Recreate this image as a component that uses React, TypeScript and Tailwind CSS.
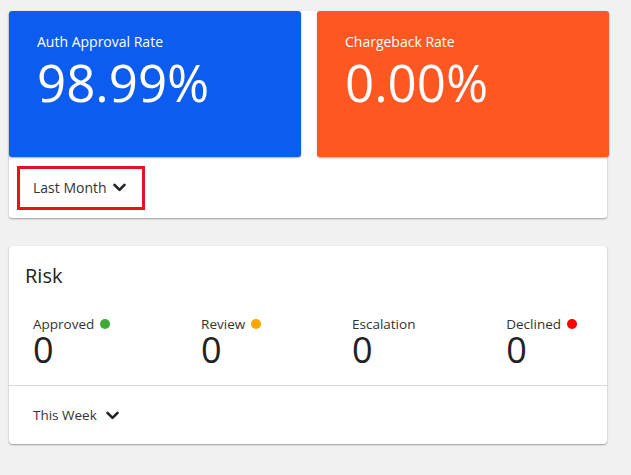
const stats = [
  { label: "Approved", value: 0, dot: "bg-[#3bab34]" },
  { label: "Review", value: 0, dot: "bg-[#ffa600]" },
  { label: "Escalation", value: 0, dot: "" },
  { label: "Declined", value: 0, dot: "bg-[#ff0000]" },
];

function Chevron() {
  return (
    <svg width="13" height="9" viewBox="0 0 13 9" className="text-[#222]">
      <path d="M1.5 1.8 L6.5 6.8 L11.5 1.8" fill="none" stroke="currentColor" strokeWidth="2.6" strokeLinecap="round" strokeLinejoin="round" />
    </svg>
  );
}

export default function App() {
  return (
    <div className="min-h-screen w-full bg-[#f1f1f1] pt-[11px] pl-[9px] font-['Open_Sans',sans-serif] text-[#222]">
      <div className="w-[598px]">
        {/* rates */}
        <section className="bg-white rounded-[3px] shadow-[0_1px_2px_rgba(0,0,0,0.35)]">
          <div className="flex gap-4 w-[600px]">
            <div className="w-[292px] h-[146px] rounded-[3px] bg-[#0d5cf0] text-white px-7 pt-[21px] shadow-[0_1px_2px_rgba(0,0,0,0.3)]">
              <div className="text-[14px] leading-[20px]">Auth Approval Rate</div>
              <div className="text-[51px] leading-[60px]">98.99%</div>
            </div>
            <div className="w-[292px] h-[146px] rounded-[3px] bg-[#ff5722] text-white px-7 pt-[21px] shadow-[0_1px_2px_rgba(0,0,0,0.3)]">
              <div className="text-[14px] leading-[20px]">Chargeback Rate</div>
              <div className="text-[51px] leading-[60px]">0.00%</div>
            </div>
          </div>
          <div className="h-[61px] flex items-center px-2">
            <button className="h-[44px] w-[128px] border-[3px] border-[#e3141e] flex items-center gap-[6px] px-[13px] text-[14px] text-[#333]">
              Last Month
              <Chevron />
            </button>
          </div>
        </section>

        {/* risk */}
        <section className="mt-[28px] bg-white rounded-[4px] shadow-[0_1px_2px_rgba(0,0,0,0.35)]">
          <div className="px-4 pt-[16px] text-[20px] leading-[28px]">Risk</div>
          <div className="flex justify-between pl-6 pr-[30px] pt-[25px] pb-[18px]">
            {stats.map((s) => (
              <div key={s.label}>
                <div className="flex items-center gap-[6px] text-[13.5px] leading-[18px] text-[#333]">
                  {s.label}
                  {s.dot && <span className={`w-[10px] h-[10px] rounded-full ${s.dot}`} />}
                </div>
                <div className="text-[36px] leading-[34px]">{s.value}</div>
              </div>
            ))}
          </div>
          <div className="border-t border-[#d9d9d9] h-[59px] flex items-center px-6 gap-[9px] text-[13.5px] text-[#333]">
            This Week
            <Chevron />
          </div>
        </section>
      </div>
    </div>
  );
}
